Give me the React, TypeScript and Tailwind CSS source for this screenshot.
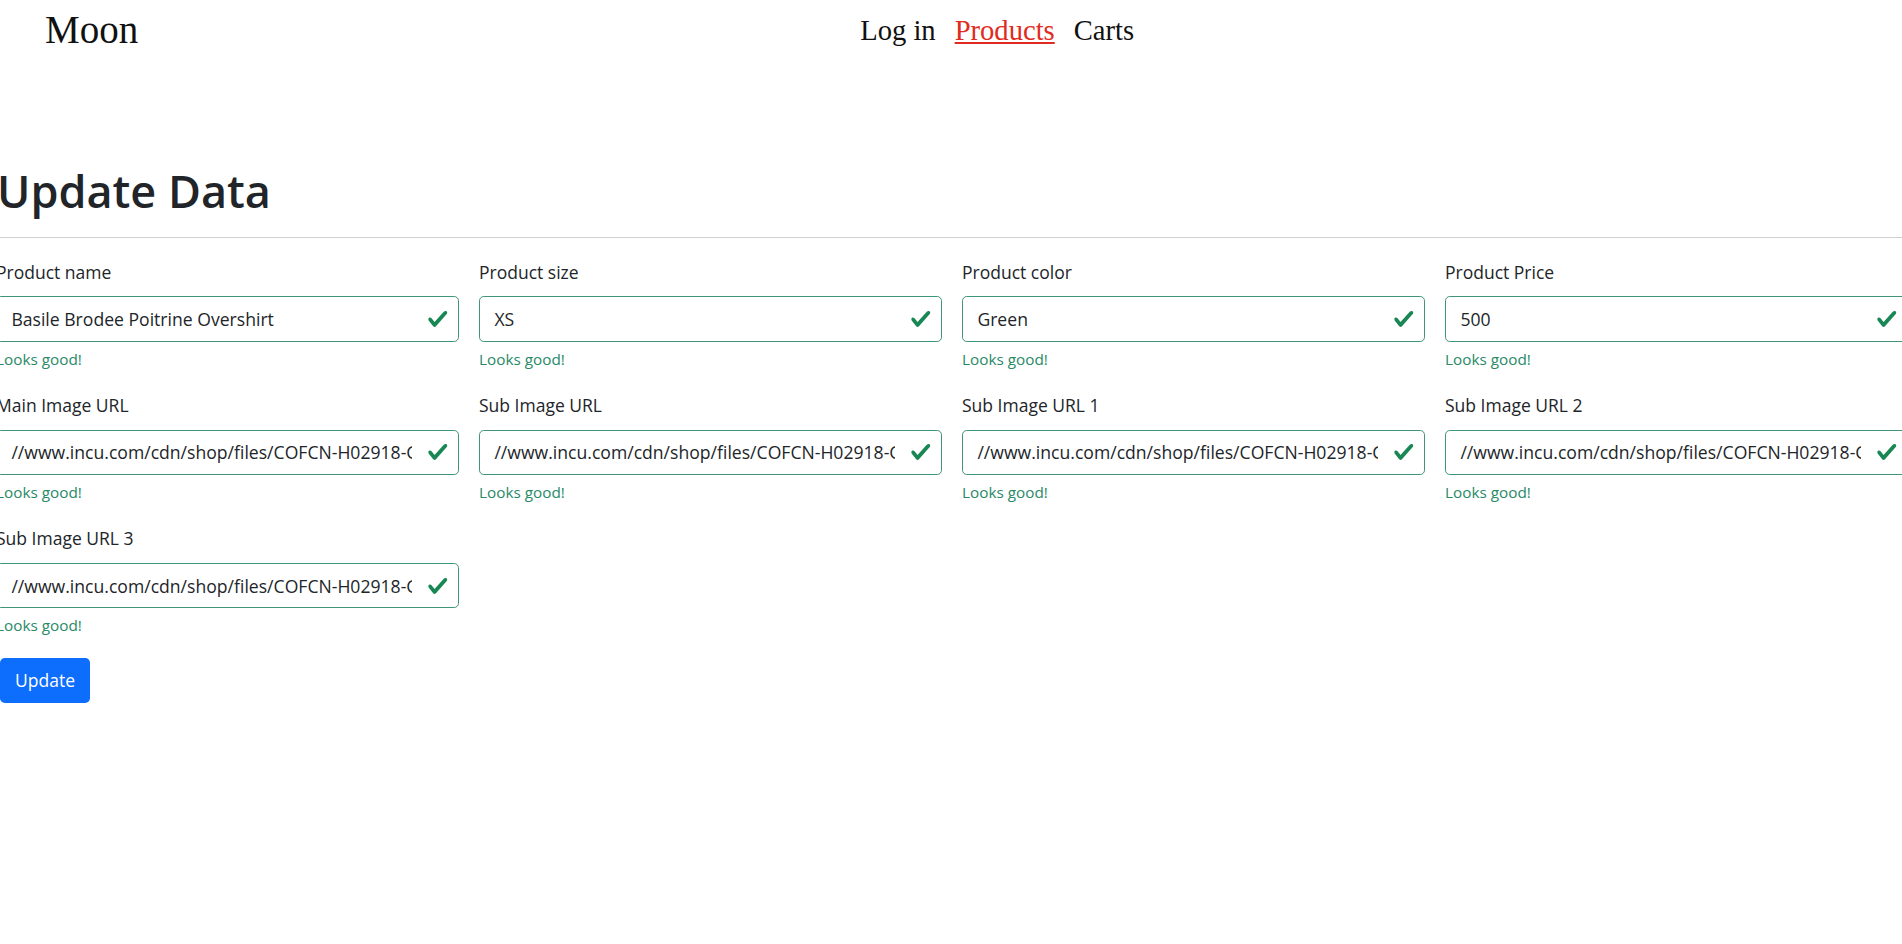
import React from "react";

const fields: { label: string; value: string }[] = [
  { label: "Product name", value: "Basile Brodee Poitrine Overshirt" },
  { label: "Product size", value: "XS" },
  { label: "Product color", value: "Green" },
  { label: "Product Price", value: "500" },
  { label: "Main Image URL", value: "//www.incu.com/cdn/shop/files/COFCN-H02918-GRN_1.jpg?v=1701234567" },
  { label: "Sub Image URL", value: "//www.incu.com/cdn/shop/files/COFCN-H02918-GRN_2.jpg?v=1701234567" },
  { label: "Sub Image URL 1", value: "//www.incu.com/cdn/shop/files/COFCN-H02918-GRN_3.jpg?v=1701234567" },
  { label: "Sub Image URL 2", value: "//www.incu.com/cdn/shop/files/COFCN-H02918-GRN_4.jpg?v=1701234567" },
  { label: "Sub Image URL 3", value: "//www.incu.com/cdn/shop/files/COFCN-H02918-GRN_5.jpg?v=1701234567" },
];

function Check() {
  return (
    <svg
      viewBox="0 0 8 8"
      className="pointer-events-none absolute right-[10.8px] top-1/2 h-[21.6px] w-[21.6px] -translate-y-1/2"
    >
      <path
        fill="#198754"
        d="M2.3 6.73.6 4.53c-.4-1.04.46-1.4 1.1-.8l1.1 1.4 3.4-3.8c.6-.63 1.6-.27 1.2.7l-4 4.6c-.43.5-.8.4-1.1.1z"
      />
    </svg>
  );
}

function Field({ label, value }: { label: string; value: string }) {
  return (
    <div className="mb-[19.2px]">
      <label className="mb-[9.6px] block text-[17.5px] leading-[28.8px] text-[#212529]">{label}</label>
      <div className="relative">
        <input
          readOnly
          value={value}
          className="block h-[45.6px] w-full rounded-[4.8px] border border-[#3f9479] bg-white pl-[14.4px] pr-[46px] text-[17.6px] text-[#212529] outline-none [font-family:'Open_Sans',sans-serif]"
        />
        <Check />
      </div>
      <div className="mt-[4.8px] text-[15.3px] leading-[25.2px] text-[#2a8a68]">Looks good!</div>
    </div>
  );
}

export default function App() {
  return (
    <div className="relative min-h-[944px] w-full overflow-hidden bg-white">
      <header className="flex h-[62px] items-start [font-family:'Liberation_Serif','Times_New_Roman',serif]">
        <div className="ml-[45px] mt-[10.4px] text-[39px] leading-none text-[#111]">Moon</div>
        <nav className="ml-[722px] mt-[16.8px] flex gap-[19px] text-[28.6px] leading-none text-[#111]">
          <span>Log in</span>
          <span className="text-[#e02b20] underline decoration-[#e02b20]">Products</span>
          <span>Carts</span>
        </nav>
      </header>
      <main className="pt-[100px] [font-family:'Open_Sans',sans-serif]">
        <h1 className="ml-[-3px] text-[45px] font-semibold leading-[57.6px] text-[#212529]">Update Data</h1>
        <hr className="mt-[17.4px] mb-[20px] border-0 border-t border-[#cfd0d1]" />
        <form className="ml-[-4px]" onSubmit={(e) => e.preventDefault()}>
          <div className="grid grid-cols-[repeat(4,463px)] gap-x-[20px]">
            {fields.map((f) => (
              <Field key={f.label} label={f.label} value={f.value} />
            ))}
          </div>
          <button
            type="submit"
            className="ml-[4px] h-[45.6px] w-[90px] rounded-[4.8px] bg-[#0d6efd] text-[17.5px] text-white"
          >
            Update
          </button>
        </form>
      </main>
    </div>
  );
}
